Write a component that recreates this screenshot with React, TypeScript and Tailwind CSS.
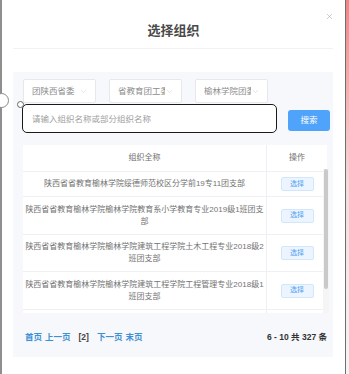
import { ChevronDown, X } from "lucide-react";

const rows: { lines: string[]; h: string }[] = [
  { lines: ["陕西省省教育榆林学院绥德师范校区分学前19专11团支部"], h: "h-[25px]" },
  { lines: ["陕西省省教育榆林学院榆林学院教育系小学教育专业2019级1班团支", "部"], h: "h-[38px]" },
  { lines: ["陕西省省教育榆林学院榆林学院建筑工程学院土木工程专业2018级2", "班团支部"], h: "h-[37px]" },
  { lines: ["陕西省省教育榆林学院榆林学院建筑工程学院工程管理专业2018级1", "班团支部"], h: "h-[38px]" },
  { lines: ["陕西省省教育榆林学院榆林学院建筑工程学院工程造价专业2018级1", "班团支部"], h: "h-[38px]" },
];

function Select({ label }: { label: string }) {
  return (
    <div className="w-[73px] h-[24px] bg-white border border-[#e6e8ec] rounded-[2px] flex items-center pl-[8px] pr-[7px]">
      <div className="w-[47px] overflow-hidden whitespace-nowrap text-[8.5px] leading-[12px] text-[#8d8d8d]">{label}</div>
      <ChevronDown size={9} strokeWidth={1} className="ml-auto text-[#b8b8b8]" />
    </div>
  );
}

export default function App() {
  return (
    <div className="w-[349px] h-[374px] flex bg-white relative overflow-hidden font-['Liberation_Sans','Noto_Sans_CJK_SC',sans-serif]">
      {/* modal */}
      <div className="w-[345px] h-full border-l-2 border-[#8e8e8e] bg-white flex flex-col relative">
        <X size={9} strokeWidth={1.3} className="absolute left-[323px] top-[12px] text-[#9a9a9a]" />
        <div className="h-[48px] flex justify-center pt-[22px]">
          <div className="text-[13px] leading-[18px] font-bold text-[#4a4a4a]">选择组织</div>
        </div>
        <div className="ml-[11px] w-[320px] h-px bg-[#f1f2f4]" />
        <div className="ml-[11px] mt-[23px] w-[320px] h-[285px] bg-[#f6f8fb] flex flex-col">
          {/* selects */}
          <div className="flex gap-[13px] pl-[10px] pt-[7px]">
            <Select label="团陕西省委" />
            <Select label="省教育团工委" />
            <Select label="榆林学院团委" />
          </div>
          {/* search row */}
          <div className="flex items-start pl-[9px] mt-[1px]">
            <div className="w-[255px] h-[29px] bg-white border-[1.5px] border-[#1a1a1a] rounded-[5px] flex items-center pl-[9px]">
              <span className="text-[8.5px] text-[#a0a0a0] leading-[12px]">请输入组织名称或部分组织名称</span>
            </div>
            <div className="ml-[11px] mt-[6px] w-[42px] h-[21px] rounded-[3px] bg-[#4fa3fa] flex items-center justify-center text-white text-[8.5px]">
              搜索
            </div>
          </div>
          {/* table */}
          <div className="ml-[10px] mt-[12px] w-[304px] bg-white relative">
            <div className="flex h-[27px] border-b border-[#eef0f3]">
              <div className="w-[244px] border-r border-[#eef0f3] flex items-center justify-center text-[8px] text-[#707070]">组织全称</div>
              <div className="flex-1 flex items-center justify-center text-[8px] text-[#707070]">操作</div>
            </div>
            <div className="h-[141px] overflow-hidden">
              {rows.map((r, i) => (
                <div key={i} className={`flex border-b border-[#eef0f3] ${r.h}`}>
                  <div className="w-[244px] shrink-0 border-r border-[#eef0f3] flex flex-col items-center justify-center px-[2px] text-[8px] leading-[12px] text-[#737373]">
                    {r.lines.map((l, j) => (
                      <div key={j} className="whitespace-nowrap">{l}</div>
                    ))}
                  </div>
                  <div className="flex-1 flex items-center justify-center">
                    <div className="w-[33px] h-[14px] rounded-[2px] bg-[#ecf5ff] border border-[#d3e7fb] flex items-center justify-center text-[7px] text-[#4ea1f2]">选择</div>
                  </div>
                </div>
              ))}
            </div>
            {/* scrollbar */}
            <div className="absolute right-[-2px] top-[24px] w-[6px] h-[144px] bg-[#f5f5f5]">
              <div className="ml-[1px] w-[4px] h-[120px] rounded-[2px] bg-[#c9c9c9]" />
            </div>
          </div>
          {/* pagination */}
          <div className="flex items-center pl-[12px] pr-[6px] mt-[18px] text-[8.5px] font-bold leading-[12px]">
            <span className="text-[#3d8fd6]">首页</span>
            <span className="text-[#3d8fd6] ml-[3px]">上一页</span>
            <span className="text-[#444] ml-[8px]">[2]</span>
            <span className="text-[#3d8fd6] ml-[8px]">下一页</span>
            <span className="text-[#3d8fd6] ml-[3px]">末页</span>
            <span className="ml-auto text-[#333]">6 - 10 共 327 条</span>
          </div>
        </div>
      </div>
      {/* right edge strip */}
      <div className="w-[4px] h-full border-l border-[#6f6f6f] bg-gradient-to-b from-[#ef8585] via-[#f2dcdc] to-[#f4f4f4]" />
      {/* decorative handles */}
      <div className="absolute left-[-6px] top-[93px] w-[15px] h-[15px] rounded-full border border-[#8a8a8a] bg-white" />
      <div className="absolute left-[17px] top-[101px] w-[7px] h-[7px] rounded-full border border-[#666] bg-white" />
    </div>
  );
}
